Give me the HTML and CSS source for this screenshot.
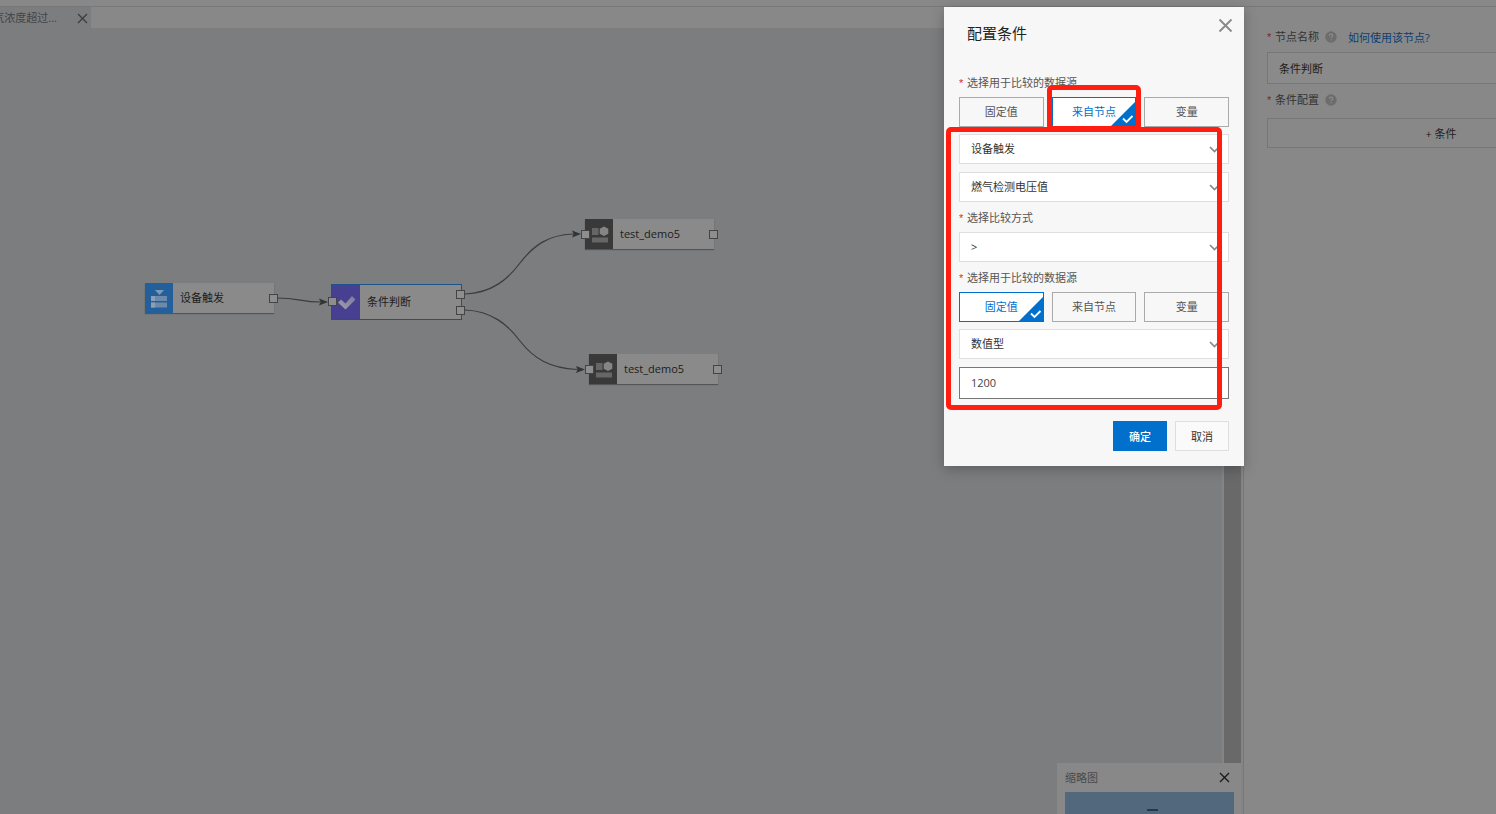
FILE: index.html
```html
<!DOCTYPE html>
<html lang="zh-CN">
<head>
<meta charset="utf-8">
<title>配置条件</title>
<link rel="stylesheet" href="styles.css">
</head>
<body>
<div class="app">
  <header class="topbar"></header>
  <div class="main">
    <section class="workspace">
      <div class="tabs">
        <div class="tab">
          <span class="tab-name">气浓度超过...</span>
          <button class="icon-btn" type="button" aria-label="关闭标签"><svg width="11" height="11" viewBox="0 0 11 11"><path d="M1 1l9 9M10 1l-9 9" fill="none" stroke="#3c3c3c" stroke-width="1.3"/></svg></button>
        </div>
      </div>
      <div class="stage">
        <div class="canvas">
          <svg class="edges" width="760" height="400" viewBox="0 28 760 400">
            <g fill="none" stroke="#3b3c3d" stroke-width="1.2">
              <path d="M277 298C298 298 302 302 320 302"/>
              <path d="M465 294C492 293 508 279 520 263C534 245 548 235 573 234"/>
              <path d="M465 310C492 311 508 325 520 341C534 359 550 368 577 369.500"/>
            </g>
            <g fill="#333435">
              <path d="M328 302l-9-3.500 1.500 3.500-1.500 3.500z"/>
              <path d="M581 234l-9-3.500 1.500 3.500-1.500 3.500z"/>
              <path d="M585 369.500l-9-3.500 1.500 3.500-1.500 3.500z"/>
            </g>
          </svg>
          <div class="node node-trigger">
            <span class="node-icon blue"><svg width="28" height="30" viewBox="0 0 28 30"><path d="M10 7h9l-4.500 5z" fill="#8298b0"/><path d="M6 13h16v5H6zM6 19.500h16v5H6z" fill="#6c8bac"/><path d="M6 13h4v5H6zM6 19.500h4v5H6z" fill="#8b9fb5"/></svg></span>
            <span class="node-name">设备触发</span>
            <i class="port out"></i>
          </div>
          <div class="node node-judge">
            <span class="node-icon purple"><svg width="28" height="34" viewBox="0 0 28 34"><defs><linearGradient id="tick" x1="0" y1="1" x2="1" y2="0"><stop offset="0" stop-color="#a0a0a6"/><stop offset="1" stop-color="#7d79a3"/></linearGradient></defs><path d="M6 17.500l3-3 4.500 4L20 11l3.500 3.500-10 10z" fill="url(#tick)"/></svg></span>
            <span class="node-name">条件判断</span>
            <i class="port in"></i>
            <i class="port out yes"></i>
            <i class="port out no"></i>
          </div>
          <div class="node node-demo-a">
            <span class="node-icon dark"><svg width="28" height="30" viewBox="0 0 28 30"><path d="M7 9h6.500v7H7zM7 18.500h16v5H7z" fill="#666"/><path d="M19 7.500l4.300 2.300v5L19 17l-4.300-2.200v-5z" fill="#858585"/></svg></span>
            <span class="node-name">test_demo5</span>
            <i class="port in"></i>
            <i class="port out"></i>
          </div>
          <div class="node node-demo-b">
            <span class="node-icon dark"><svg width="28" height="30" viewBox="0 0 28 30"><path d="M7 9h6.500v7H7zM7 18.500h16v5H7z" fill="#666"/><path d="M19 7.500l4.300 2.300v5L19 17l-4.300-2.200v-5z" fill="#858585"/></svg></span>
            <span class="node-name">test_demo5</span>
            <i class="port in"></i>
            <i class="port out"></i>
          </div>
        </div>
        <div class="scrollbar"><div class="thumb"></div></div>
        <aside class="minimap">
          <div class="minimap-head">
            <span>缩略图</span>
            <button class="icon-btn" type="button" aria-label="关闭缩略图"><svg width="11" height="11" viewBox="0 0 11 11"><path d="M1 1l9 9M10 1l-9 9" fill="none" stroke="#1c1c1c" stroke-width="1.400"/></svg></button>
          </div>
          <div class="minimap-view"><i class="minimap-node"></i></div>
        </aside>
      </div>
    </section>

    <aside class="side">
      <div class="side-body">
        <div class="side-row">
          <label for="node-name"><b class="req">*</b>节点名称</label>
          <svg class="help" width="12" height="12" viewBox="0 0 12 12"><circle cx="6" cy="6" r="5.700" fill="#6d6d6d"/><path d="M4.300 4.800c0-2.300 3.400-2.200 3.400-.200 0 1.300-1.600 1.300-1.600 2.500M6.100 8.300v1.100" fill="none" stroke="#8c8c8c" stroke-width="1.100"/></svg>
          <a class="link" href="#help">如何使用该节点?</a>
        </div>
        <input class="side-input" id="node-name" type="text" value="条件判断">
        <div class="side-row second">
          <span><b class="req">*</b>条件配置</span>
          <svg class="help" width="12" height="12" viewBox="0 0 12 12"><circle cx="6" cy="6" r="5.700" fill="#6d6d6d"/><path d="M4.300 4.800c0-2.300 3.400-2.200 3.400-.200 0 1.300-1.600 1.300-1.600 2.500M6.100 8.300v1.100" fill="none" stroke="#8c8c8c" stroke-width="1.100"/></svg>
        </div>
        <button class="add" type="button">+ 条件</button>
      </div>
    </aside>
  </div>

  <form class="dialog" role="dialog" aria-labelledby="dialog-title">
    <div class="dialog-head">
      <h1 class="dialog-title" id="dialog-title">配置条件</h1>
      <button class="icon-btn" type="button" aria-label="关闭"><svg width="15" height="15" viewBox="0 0 15 15"><path d="M1.500 1.500l12 12M13.500 1.500l-12 12" fill="none" stroke="#888" stroke-width="1.800"/></svg></button>
    </div>
    <div class="field-label"><b class="req">*</b>选择用于比较的数据源</div>
    <div class="choices">
      <button class="choice" type="button" aria-pressed="false">固定值</button>
      <button class="choice on" type="button" aria-pressed="true">来自节点<svg class="corner" width="24" height="24" viewBox="0 0 24 24"><path d="M24 0v24H0z" fill="#0070cc"/><path d="M12 16.500l3.500 3.500 6-6" fill="none" stroke="#fff" stroke-width="1.800"/></svg></button>
      <button class="choice" type="button" aria-pressed="false">变量</button>
    </div>
    <div class="select first">
      <select aria-label="节点"><option>设备触发</option></select>
      <svg class="chevron" width="11" height="7" viewBox="0 0 11 7"><path d="M1 1l4.500 4.500L10 1" fill="none" stroke="#888" stroke-width="1.700"/></svg>
    </div>
    <div class="select">
      <select aria-label="属性"><option>燃气检测电压值</option></select>
      <svg class="chevron" width="11" height="7" viewBox="0 0 11 7"><path d="M1 1l4.500 4.500L10 1" fill="none" stroke="#888" stroke-width="1.700"/></svg>
    </div>
    <label class="field-label spaced" for="operator"><b class="req">*</b>选择比较方式</label>
    <div class="select bare">
      <select id="operator"><option>&gt;</option></select>
      <svg class="chevron" width="11" height="7" viewBox="0 0 11 7"><path d="M1 1l4.500 4.500L10 1" fill="none" stroke="#888" stroke-width="1.700"/></svg>
    </div>
    <div class="field-label spaced"><b class="req">*</b>选择用于比较的数据源</div>
    <div class="choices">
      <button class="choice on" type="button" aria-pressed="true">固定值<svg class="corner" width="24" height="24" viewBox="0 0 24 24"><path d="M24 0v24H0z" fill="#0070cc"/><path d="M12 16.500l3.500 3.500 6-6" fill="none" stroke="#fff" stroke-width="1.800"/></svg></button>
      <button class="choice" type="button" aria-pressed="false">来自节点</button>
      <button class="choice" type="button" aria-pressed="false">变量</button>
    </div>
    <div class="select first">
      <select aria-label="类型"><option>数值型</option></select>
      <svg class="chevron" width="11" height="7" viewBox="0 0 11 7"><path d="M1 1l4.500 4.500L10 1" fill="none" stroke="#888" stroke-width="1.700"/></svg>
    </div>
    <input class="value" type="text" value="1200" aria-label="比较值">
    <div class="actions">
      <button class="btn primary" type="button">确定</button>
      <button class="btn" type="button">取消</button>
    </div>
    <i class="mark mark-source"></i>
    <i class="mark mark-fields"></i>
  </form>
</div>
</body>
</html>
```
FILE: styles.css
```css
* { box-sizing: border-box; }
body {
  margin: 0;
  font-family: "Open Sans", "Noto Sans CJK SC", sans-serif;
  font-size: 11px;
  line-height: 18px;
  color: #333;
}
button, input, select { font: inherit; margin: 0; border-radius: 0; }
svg { display: block; }
.app { position: relative; display: flex; flex-direction: column; height: 100vh; overflow: hidden; background: #888; }
.topbar { flex: none; height: 7px; border-bottom: 1px solid #787878; background: #888; }
.main { flex: 1; display: flex; min-height: 0; }
.icon-btn { padding: 0; border: 0; background: none; }

.workspace { flex: 1; min-width: 0; display: flex; flex-direction: column; border-right: 1px solid #777; }
.tabs { flex: none; display: flex; height: 21px; background: #888; }
.tab { display: flex; align-items: center; justify-content: flex-end; gap: 20px; width: 91px; padding: 1px 3px 0 0; overflow: hidden; background: #7c7d7f; color: #444; }
.tab-name { flex: none; white-space: nowrap; }
.stage { position: relative; flex: 1; display: flex; min-height: 0; }
.canvas { position: relative; flex: 1; overflow: hidden; background: #7c7d7f; }
.scrollbar { flex: none; width: 21px; padding: 0 2px; background: #858585; }
.thumb { height: 100%; background: #696969; }

.edges { position: absolute; left: 0; top: 0; }
.node { position: absolute; display: flex; align-items: center; width: 129px; height: 30px; background: #8a8a8a; box-shadow: 0 1px 1px #555; color: #1c1c1c; }
.node-icon { flex: none; align-self: stretch; width: 28px; }
.node-name { padding-left: 7px; }
.blue { background: #225f9b; }
.purple { background: #474090; }
.dark { background: #393939; }
.node-trigger { left: 145px; top: 255px; }
.node-judge { left: 331px; top: 256px; width: 131px; height: 36px; border: 1px solid #1c5388; box-shadow: none; }
.node-demo-a { left: 585px; top: 191px; }
.node-demo-b { left: 589px; top: 326px; }
.port { position: absolute; top: 11px; width: 9px; height: 9px; border: 1px solid #444; background: #8e8e8e; }
.port.in { left: -4px; }
.port.out { right: -4px; }
.node-judge .in { top: 12px; }
.node-judge .yes { top: 5px; }
.node-judge .no { top: 21px; }

.minimap { position: absolute; right: 2px; bottom: 0; width: 184px; padding: 0 7px 0 8px; background: #888; color: #4a4a4a; }
.minimap-head { display: flex; align-items: center; justify-content: space-between; height: 29px; padding-right: 4px; }
.minimap-view { display: flex; justify-content: center; height: 22px; padding-top: 17px; background: #52687c; }
.minimap-node { width: 11px; height: 2px; margin-left: 6px; background: #1d3a58; }

.side { flex: none; width: 252px; overflow: hidden; background: #888; }
.side-body { width: 371px; padding: 21px 0 0 23px; }
.side-row { display: flex; align-items: center; height: 18px; color: #333; }
.req { display: inline-block; width: 8px; font-family: "Liberation Sans", sans-serif; font-weight: 400; color: #d93026; }
.side .req { color: #7d2822; }
.help { margin-left: 6px; }
.link { margin-left: 11px; padding-top: 2px; color: #0b3f70; text-decoration: none; }
.side-input { display: block; width: 100%; height: 32px; margin-top: 6px; padding: 0 11px; border: 1px solid #777; background: #8a8a8a; color: #1c1c1c; }
.second { margin-top: 7px; }
.add { display: block; width: 100%; height: 30px; margin-top: 9px; padding: 2px 0 0; border: 1px solid #777; background: #888; color: #222; }

.dialog { position: absolute; top: 7px; right: 252px; width: 300px; padding: 0 15px 15px; background: #f7f7f7; box-shadow: 0 3px 12px rgba(0, 0, 0, .25); }
.dialog-head { display: flex; justify-content: space-between; align-items: flex-start; height: 67px; padding: 11px 0 0 8px; }
.dialog-head .icon-btn { margin-right: -4px; }
.dialog-title { margin: 4px 0 0; font-size: 15px; line-height: 22px; font-weight: 400; color: #222; }
.field-label { display: block; margin-bottom: 5px; color: #555; }
.spaced { margin-top: 7px; }
.choices { display: flex; gap: 8px; }
.choice { position: relative; flex: 1; height: 30px; padding: 0; border: 1px solid #aaa; background: #f7f7f7; color: #555; }
.choice.on { border-color: #0070cc; background: #fff; color: #0070cc; }
.corner { position: absolute; right: 0; bottom: 0; }
.select { position: relative; margin-top: 8px; }
.select.first { margin-top: 7px; }
.select.bare { margin-top: 0; }
.select select { display: block; width: 100%; height: 30px; padding: 0 11px; border: 1px solid #dedede; background: #fff; color: #333; appearance: none; }
.chevron { position: absolute; right: 9px; top: 12px; }
.value { display: block; width: 100%; height: 32px; margin-top: 8px; padding: 0 11px 2px; border: 1px solid #777; background: #fff; color: #444; }
.actions { display: flex; justify-content: flex-end; gap: 8px; margin-top: 22px; }
.btn { width: 54px; height: 30px; padding: 2px 0 0; border: 1px solid #dedede; background: #fafafa; color: #333; }
.btn.primary { border-color: #0070cc; background: #0070cc; color: #fff; font-weight: 500; }
.mark { position: absolute; border: 5px solid #ff1e10; border-radius: 5px; pointer-events: none; }
.mark-source { left: 103px; top: 78px; width: 94px; height: 46px; }
.mark-fields { left: 2px; top: 120px; width: 276px; height: 283px; }
```
